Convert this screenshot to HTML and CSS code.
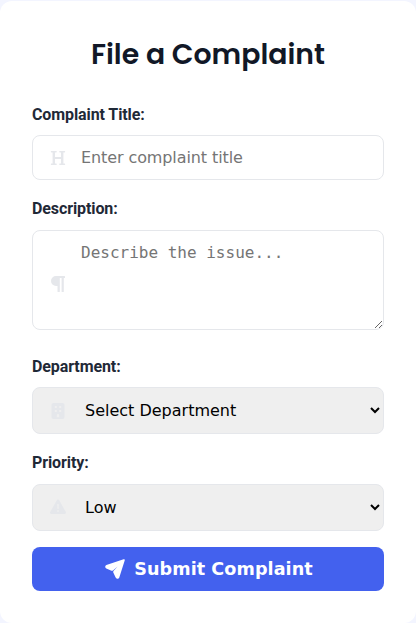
FILE: index.html
```html
<!DOCTYPE html>
<html lang="en">
<head>
<meta charset="utf-8">
<title>File a Complaint</title>
<link rel="stylesheet" href="styles.css">
</head>
<body>
<main class="card">
  <h1 class="title">File a Complaint</h1>
  <form>
    <div class="group">
      <label class="label label-low" for="title">Complaint Title:</label>
      <div class="field">
        <svg class="icon icon-low" viewBox="0 0 16 16"><path d="M1.400 1H6.200Q6.800 1 6.800 1.700T6.200 2.500H5V7H11V2.500H9.800Q9.200 2.500 9.200 1.700T9.800 1H14.600Q15.200 1 15.200 1.700T14.600 2.500H13.400V13.500H14.600Q15.200 13.500 15.200 14.200T14.600 15H9.800Q9.200 15 9.200 14.200T9.800 13.500H11V9H5V13.500H6.200Q6.800 13.500 6.800 14.200T6.200 15H1.400Q.8 15 .8 14.200T1.400 13.500H2.600V2.500H1.400Q.8 2.500 .8 1.700T1.400 1z"/></svg>
        <input class="control input" id="title" type="text" placeholder="Enter complaint title">
      </div>
    </div>
    <div class="group">
      <label class="label" for="description">Description:</label>
      <div class="field field-description">
        <svg class="icon icon-low" viewBox="0 0 16 16"><path d="M6 0H14.500Q15 0 15 .5V1.500Q15 2 14.500 2H13.800V15.500Q13.800 16 13.300 16H12.100Q11.600 16 11.600 15.500V2H9.800V15.500Q9.800 16 9.300 16H8Q7.500 16 7.500 15.500V10H6A5 5 0 0 1 6 0z"/></svg>
        <textarea class="control textarea" id="description" placeholder="Describe the issue..."></textarea>
      </div>
    </div>
    <div class="group">
      <label class="label label-low" for="department">Department:</label>
      <div class="field">
        <svg class="icon icon-low" viewBox="0 0 16 16"><path fill-rule="evenodd" d="M3.500 0h9a2 2 0 0 1 2 2v12a2 2 0 0 1-2 2h-9a2 2 0 0 1-2-2V2a2 2 0 0 1 2-2zM4.800 3v2h2V3zM9.200 3v2h2V3zM4.800 7v2h2V7zM9.200 7v2h2V7zM6.800 14.200h2.400v-2a1.200 1.200 0 0 0-2.400 0z"/></svg>
        <select class="control select" id="department"><option>Select Department</option></select>
      </div>
    </div>
    <div class="group">
      <label class="label" for="priority">Priority:</label>
      <div class="field">
        <svg class="icon" viewBox="0 0 512 512"><path fill-rule="evenodd" d="M256 16c14.200 0 27.300 7.500 34.500 19.800l216 384c7.300 12.400 7.300 27.700.200 40.100S486.300 480 472 480H40c-14.300 0-27.600-7.700-34.700-20.100s-7-27.800.200-40.100l216-384C228.700 23.500 241.800 16 256 16zm0 144c-17 0-28 12-26 28l8 112c1 11 8 18 18 18s17-7 18-18l8-112c2-16-9-28-26-28zm28 220a28 28 0 1 0-56 0 28 28 0 1 0 56 0z"/></svg>
        <select class="control select" id="priority"><option>Low</option></select>
      </div>
    </div>
    <button class="submit" type="button">
      <svg class="send" viewBox="0 0 20 20"><path d="M18.600.300Q20.100-.1 19.700 1.400L14.200 18.700Q13.600 20 12.200 19.700Q11 19.400 10.500 18.300L8.300 13.500Q8 12.700 8.500 12L12.600 7.400L8 11.500Q7.300 12 6.500 11.700L1.300 9.400Q.2 8.900.2 7.800Q.2 6.600 1.400 6.100z"/></svg>
      <span>Submit Complaint</span>
    </button>
  </form>
</main>
</body>
</html>
```
FILE: styles.css
```css
* { box-sizing: border-box; }
body {
  margin: 0;
  padding-top: 1px;
  height: 623px;
  overflow: hidden;
  background: #f3f5ff;
  font-family: Roboto, sans-serif;
}
.card {
  height: 622px;
  padding: 32px;
  border-radius: 12px;
  background: #fff;
}
.title {
  margin: 0 0 24px;
  height: 44.400px;
  line-height: 42px;
  font-family: Poppins, sans-serif;
  font-size: 28.300px;
  font-weight: 600;
  text-align: center;
  color: #111827;
}
.group { margin-bottom: 16px; }
.label {
  display: block;
  height: 25.600px;
  margin-bottom: 8px;
  line-height: 26px;
  font-size: 16px;
  font-weight: 700;
  letter-spacing: -0.100px;
  color: #1f2937;
}
.label-low { padding-top: 1px; }
.field { position: relative; display: flex; }
.field-description { padding-bottom: 7.800px; }
.icon {
  position: absolute;
  left: 18px;
  top: 50%;
  width: 16px;
  height: 16px;
  transform: translateY(-50%);
  fill: #e5e7eb;
}
.icon-low { margin-top: 0.600px; }
.control {
  width: 100%;
  margin: 0;
  border: 1px solid #e5e7eb;
  border-radius: 8px;
  font-family: "DejaVu Sans", sans-serif;
  font-size: 16px;
}
.input { height: 45px; padding: 12px 16px 12px 48px; letter-spacing: -0.100px; }
.textarea {
  height: 100px;
  padding: 12px 16px 12px 48px;
  font-family: "DejaVu Sans Mono", monospace;
  resize: vertical;
}
.select { height: 47px; padding: 12px 0 12px 48px; background-color: #efefef; color: #000; }
.submit {
  display: flex;
  align-items: center;
  justify-content: center;
  gap: 9px;
  width: 100%;
  height: 44.400px;
  padding: 0 0 0 2px;
  border: 0;
  border-radius: 8px;
  background: #4361ee;
  color: #fff;
  font-family: "DejaVu Sans", sans-serif;
  font-size: 17.600px;
  font-weight: 600;
  letter-spacing: 0.060px;
}
.send { width: 20px; height: 20px; fill: #fff; }
```
